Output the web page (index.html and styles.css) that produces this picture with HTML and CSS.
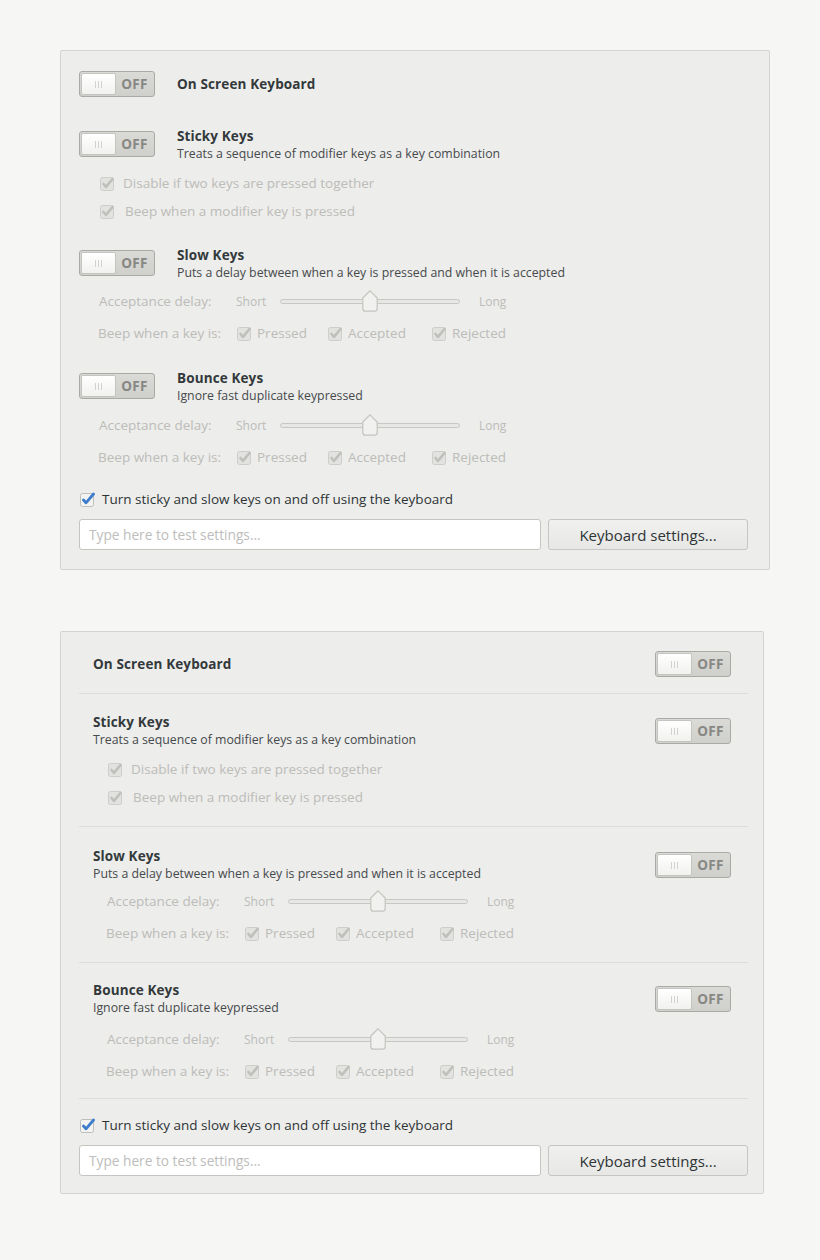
FILE: index.html
```html
<!DOCTYPE html>
<html>
<head>
<meta charset="utf-8">
<link rel="stylesheet" href="styles.css">
</head>
<body>
<div class="page">

  <section class="panel panel-a">
    <div class="srow r1">
      <span class="switch"><span class="knob"><i></i><i></i><i></i></span><span class="off">OFF</span></span>
      <div class="stext"><div class="title">On Screen Keyboard</div></div>
    </div>

    <div class="srow r2">
      <span class="switch"><span class="knob"><i></i><i></i><i></i></span><span class="off">OFF</span></span>
      <div class="stext two"><div class="title">Sticky Keys</div><div class="desc">Treats a sequence of modifier keys as a key combination</div></div>
    </div>
    <div class="opts o2">
      <div class="check"><svg class="cb" viewBox="0 0 16 16"><rect x="1.5" y="2.5" width="13" height="13" rx="2"/><path d="M4.5 9 L7 11.8 L13.5 4"/></svg><span>Disable if two keys are pressed together</span></div>
      <div class="check"><svg class="cb" viewBox="0 0 16 16"><rect x="1.5" y="2.5" width="13" height="13" rx="2"/><path d="M4.5 9 L7 11.8 L13.5 4"/></svg><span class="nudge">Beep when a modifier key is pressed</span></div>
    </div>

    <div class="srow r3">
      <span class="switch"><span class="knob"><i></i><i></i><i></i></span><span class="off">OFF</span></span>
      <div class="stext two"><div class="title">Slow Keys</div><div class="desc">Puts a delay between when a key is pressed and when it is accepted</div></div>
    </div>
    <div class="opts o3">
      <div class="frow">
        <span class="flabel">Acceptance delay:</span>
        <span class="short">Short</span>
        <span class="track"><svg class="handle" viewBox="0 0 16 22"><path d="M8 0.8 L15.2 8 V18.5 Q15.2 21.2 12.5 21.2 H3.5 Q0.8 21.2 0.8 18.5 V8 Z"/></svg></span>
        <span class="long">Long</span>
      </div>
      <div class="frow">
        <span class="flabel beep">Beep when a key is:</span>
        <span class="ck w1"><svg class="cb" viewBox="0 0 16 16"><rect x="1.5" y="2.5" width="13" height="13" rx="2"/><path d="M4.5 9 L7 11.8 L13.5 4"/></svg>Pressed</span>
        <span class="ck w2"><svg class="cb" viewBox="0 0 16 16"><rect x="1.5" y="2.5" width="13" height="13" rx="2"/><path d="M4.5 9 L7 11.8 L13.5 4"/></svg>Accepted</span>
        <span class="ck"><svg class="cb" viewBox="0 0 16 16"><rect x="1.5" y="2.5" width="13" height="13" rx="2"/><path d="M4.5 9 L7 11.8 L13.5 4"/></svg>Rejected</span>
      </div>
    </div>

    <div class="srow r4">
      <span class="switch"><span class="knob"><i></i><i></i><i></i></span><span class="off">OFF</span></span>
      <div class="stext two"><div class="title">Bounce Keys</div><div class="desc">Ignore fast duplicate keypressed</div></div>
    </div>
    <div class="opts o4">
      <div class="frow">
        <span class="flabel">Acceptance delay:</span>
        <span class="short">Short</span>
        <span class="track"><svg class="handle" viewBox="0 0 16 22"><path d="M8 0.8 L15.2 8 V18.5 Q15.2 21.2 12.5 21.2 H3.5 Q0.8 21.2 0.8 18.5 V8 Z"/></svg></span>
        <span class="long">Long</span>
      </div>
      <div class="frow">
        <span class="flabel beep">Beep when a key is:</span>
        <span class="ck w1"><svg class="cb" viewBox="0 0 16 16"><rect x="1.5" y="2.5" width="13" height="13" rx="2"/><path d="M4.5 9 L7 11.8 L13.5 4"/></svg>Pressed</span>
        <span class="ck w2"><svg class="cb" viewBox="0 0 16 16"><rect x="1.5" y="2.5" width="13" height="13" rx="2"/><path d="M4.5 9 L7 11.8 L13.5 4"/></svg>Accepted</span>
        <span class="ck"><svg class="cb" viewBox="0 0 16 16"><rect x="1.5" y="2.5" width="13" height="13" rx="2"/><path d="M4.5 9 L7 11.8 L13.5 4"/></svg>Rejected</span>
      </div>
    </div>

    <div class="toggle-all"><svg class="cb on" viewBox="0 0 16 16"><rect x="1.5" y="2.5" width="13" height="13" rx="2"/><path d="M4.5 9 L7 11.8 L14.5 3"/></svg><span>Turn sticky and slow keys on and off using the keyboard</span></div>
    <div class="entry-row">
      <input class="entry" type="text" placeholder="Type here to test settings...">
      <button class="btn">Keyboard settings...</button>
    </div>
  </section>

  <section class="panel panel-b">
    <div class="prow p1">
      <div class="phead">
        <div class="stext"><div class="title">On Screen Keyboard</div></div>
        <span class="switch"><span class="knob"><i></i><i></i><i></i></span><span class="off">OFF</span></span>
      </div>
    </div>

    <div class="prow p2">
      <div class="phead">
        <div class="stext"><div class="title">Sticky Keys</div><div class="desc">Treats a sequence of modifier keys as a key combination</div></div>
        <span class="switch"><span class="knob"><i></i><i></i><i></i></span><span class="off">OFF</span></span>
      </div>
      <div class="opts">
        <div class="check"><svg class="cb" viewBox="0 0 16 16"><rect x="1.5" y="2.5" width="13" height="13" rx="2"/><path d="M4.5 9 L7 11.8 L13.5 4"/></svg><span>Disable if two keys are pressed together</span></div>
        <div class="check"><svg class="cb" viewBox="0 0 16 16"><rect x="1.5" y="2.5" width="13" height="13" rx="2"/><path d="M4.5 9 L7 11.8 L13.5 4"/></svg><span class="nudge">Beep when a modifier key is pressed</span></div>
      </div>
    </div>

    <div class="prow p3">
      <div class="phead">
        <div class="stext"><div class="title">Slow Keys</div><div class="desc">Puts a delay between when a key is pressed and when it is accepted</div></div>
        <span class="switch"><span class="knob"><i></i><i></i><i></i></span><span class="off">OFF</span></span>
      </div>
      <div class="opts">
        <div class="frow">
          <span class="flabel">Acceptance delay:</span>
          <span class="short">Short</span>
          <span class="track"><svg class="handle" viewBox="0 0 16 22"><path d="M8 0.8 L15.2 8 V18.5 Q15.2 21.2 12.5 21.2 H3.5 Q0.8 21.2 0.8 18.5 V8 Z"/></svg></span>
          <span class="long">Long</span>
        </div>
        <div class="frow">
          <span class="flabel beep">Beep when a key is:</span>
          <span class="ck w1"><svg class="cb" viewBox="0 0 16 16"><rect x="1.5" y="2.5" width="13" height="13" rx="2"/><path d="M4.5 9 L7 11.8 L13.5 4"/></svg>Pressed</span>
          <span class="ck w2"><svg class="cb" viewBox="0 0 16 16"><rect x="1.5" y="2.5" width="13" height="13" rx="2"/><path d="M4.5 9 L7 11.8 L13.5 4"/></svg>Accepted</span>
          <span class="ck"><svg class="cb" viewBox="0 0 16 16"><rect x="1.5" y="2.5" width="13" height="13" rx="2"/><path d="M4.5 9 L7 11.8 L13.5 4"/></svg>Rejected</span>
        </div>
      </div>
    </div>

    <div class="prow p4">
      <div class="phead">
        <div class="stext"><div class="title">Bounce Keys</div><div class="desc">Ignore fast duplicate keypressed</div></div>
        <span class="switch"><span class="knob"><i></i><i></i><i></i></span><span class="off">OFF</span></span>
      </div>
      <div class="opts">
        <div class="frow">
          <span class="flabel">Acceptance delay:</span>
          <span class="short">Short</span>
          <span class="track"><svg class="handle" viewBox="0 0 16 22"><path d="M8 0.8 L15.2 8 V18.5 Q15.2 21.2 12.5 21.2 H3.5 Q0.8 21.2 0.8 18.5 V8 Z"/></svg></span>
          <span class="long">Long</span>
        </div>
        <div class="frow">
          <span class="flabel beep">Beep when a key is:</span>
          <span class="ck w1"><svg class="cb" viewBox="0 0 16 16"><rect x="1.5" y="2.5" width="13" height="13" rx="2"/><path d="M4.5 9 L7 11.8 L13.5 4"/></svg>Pressed</span>
          <span class="ck w2"><svg class="cb" viewBox="0 0 16 16"><rect x="1.5" y="2.5" width="13" height="13" rx="2"/><path d="M4.5 9 L7 11.8 L13.5 4"/></svg>Accepted</span>
          <span class="ck"><svg class="cb" viewBox="0 0 16 16"><rect x="1.5" y="2.5" width="13" height="13" rx="2"/><path d="M4.5 9 L7 11.8 L13.5 4"/></svg>Rejected</span>
        </div>
      </div>
    </div>

    <div class="pfoot">
      <div class="toggle-all"><svg class="cb on" viewBox="0 0 16 16"><rect x="1.5" y="2.5" width="13" height="13" rx="2"/><path d="M4.5 9 L7 11.8 L14.5 3"/></svg><span>Turn sticky and slow keys on and off using the keyboard</span></div>
      <div class="entry-row">
        <input class="entry" type="text" placeholder="Type here to test settings...">
        <button class="btn">Keyboard settings...</button>
      </div>
    </div>
  </section>

</div>
</body>
</html>
```

FILE: styles.css
```css
* { box-sizing: border-box; }

body {
  margin: 0;
  background: #f6f6f4;
  font-family: "Open Sans", "Noto Sans", sans-serif;
  color: #2e3436;
}

.page {
  padding: 50px 0 40px 60px;
}

.panel {
  background: #ededeb;
  border: 1px solid #d3d3cf;
  border-radius: 2px;
}

.panel-a {
  width: 710px;
  padding: 20px 21px 19px 18px;
}

.panel-b {
  width: 704px;
  margin-top: 61px;
  padding: 0 15px 17px 18px;
}

/* switch */
.switch {
  flex: none;
  width: 76px;
  height: 26px;
  padding: 1px;
  border: 1px solid #a9a9a5;
  border-radius: 3px;
  background: linear-gradient(#dadad6, #cfcfcb);
  display: flex;
  align-items: center;
}

.knob {
  width: 35px;
  height: 22px;
  border: 1px solid #c4c4c0;
  border-radius: 2px;
  background: linear-gradient(#ffffff, #f1f1ef);
  display: flex;
  justify-content: center;
  align-items: center;
  gap: 2px;
}

.knob i {
  width: 1px;
  height: 7px;
  background: #d2d2ce;
}

.off {
  flex: 1;
  text-align: center;
  font-size: 13.5px;
  font-weight: 700;
  color: #878783;
  letter-spacing: 0.3px;
}

/* text blocks */
.title {
  font-size: 13.5px;
  font-weight: 700;
  line-height: 18px;
  letter-spacing: 0.12px;
  color: #33393b;
}

.desc {
  font-size: 12.3px;
  line-height: 18px;
  color: #464a4c;
}

.stext.two { padding-top: 2px; }

/* panel A rows */
.srow {
  display: flex;
  align-items: center;
  gap: 22px;
}

.r2 { margin-top: 28px; }
.r3 { margin-top: 19px; }
.r4 { margin-top: 18px; }

.panel-a .opts { padding-left: 20px; }
.o2 { margin-top: 6px; }
.o3 { margin-top: 3px; }
.o4 { margin-top: 4px; }

/* checkboxes */
.cb {
  width: 16px;
  height: 16px;
  flex: none;
}

.cb rect {
  fill: #e2e2e0;
  stroke: #cdcdc9;
  stroke-width: 1;
}

.cb path {
  fill: none;
  stroke: #bfbfbb;
  stroke-width: 2.6;
  stroke-linecap: round;
  stroke-linejoin: round;
}

.cb.on rect {
  fill: #f3f3f1;
  stroke: #bdbdb9;
}

.cb.on path {
  stroke: #3d7ccc;
  stroke-width: 2.8;
}

.check {
  display: flex;
  align-items: center;
  gap: 8px;
  height: 28px;
  font-size: 13.5px;
  color: #bcbcb8;
}

.nudge { margin-left: 2px; }

/* option rows */
.frow {
  display: flex;
  align-items: center;
  height: 32px;
  font-size: 13.5px;
  color: #bcbcb8;
}

.flabel {
  flex: none;
  width: 137px;
}

.flabel.beep { margin-left: -1px; width: 138px; }

.short {
  flex: none;
  width: 44px;
  font-size: 12px;
}

.long {
  margin-left: 19px;
  font-size: 12px;
}

.track {
  position: relative;
  flex: none;
  width: 180px;
  height: 5px;
  border: 1px solid #c7c7c3;
  border-radius: 3px;
  background: #e7e7e5;
}

.handle {
  position: absolute;
  left: 50%;
  top: 50%;
  width: 16px;
  height: 22px;
  transform: translate(-50%, -50%);
}

.handle path {
  fill: #f1f1ef;
  stroke: #c3c3bf;
  stroke-width: 1.2;
}

.ck {
  display: flex;
  align-items: center;
  gap: 5px;
}

.ck.w1 { width: 91px; flex: none; }
.ck.w2 { width: 104px; flex: none; }

/* footer */
.toggle-all {
  display: flex;
  align-items: center;
  gap: 7px;
  height: 24px;
  margin-top: 14px;
  font-size: 13.5px;
  color: #2e3436;
}

.entry-row {
  display: flex;
  gap: 7px;
  margin-top: 8px;
}

.entry {
  flex: 1;
  min-width: 0;
  height: 31px;
  margin: 0;
  padding: 0 0 0 9px;
  border: 1px solid #c4c4c0;
  border-radius: 3px;
  background: #ffffff;
  font-family: inherit;
  font-size: 13.7px;
  color: #2e3436;
  outline: none;
}

.entry::placeholder {
  color: #bdbdbb;
}

.btn {
  flex: none;
  width: 200px;
  height: 31px;
  margin: 0;
  border: 1px solid #c6c6c2;
  border-radius: 3px;
  background: linear-gradient(#f0f0ee, #e7e7e5);
  font-family: inherit;
  font-size: 15px;
  color: #2e3436;
}

/* panel B rows */
.prow {
  border-bottom: 1px solid #dcdcd8;
  padding-left: 14px;
  padding-right: 17px;
}

.phead {
  display: flex;
  justify-content: space-between;
  align-items: center;
}

.panel-b .opts { padding-left: 14px; }

.p1 { padding-top: 19px; padding-bottom: 16px; }
.p2 { padding-top: 19px; padding-bottom: 15px; }
.p2 .opts { margin-top: 6px; }
.p3 { padding-top: 20px; padding-bottom: 13px; }
.p3 .opts { margin-top: 2px; }
.p4 { padding-top: 18px; padding-bottom: 11px; }
.p4 .opts { margin-top: 6px; }
```
